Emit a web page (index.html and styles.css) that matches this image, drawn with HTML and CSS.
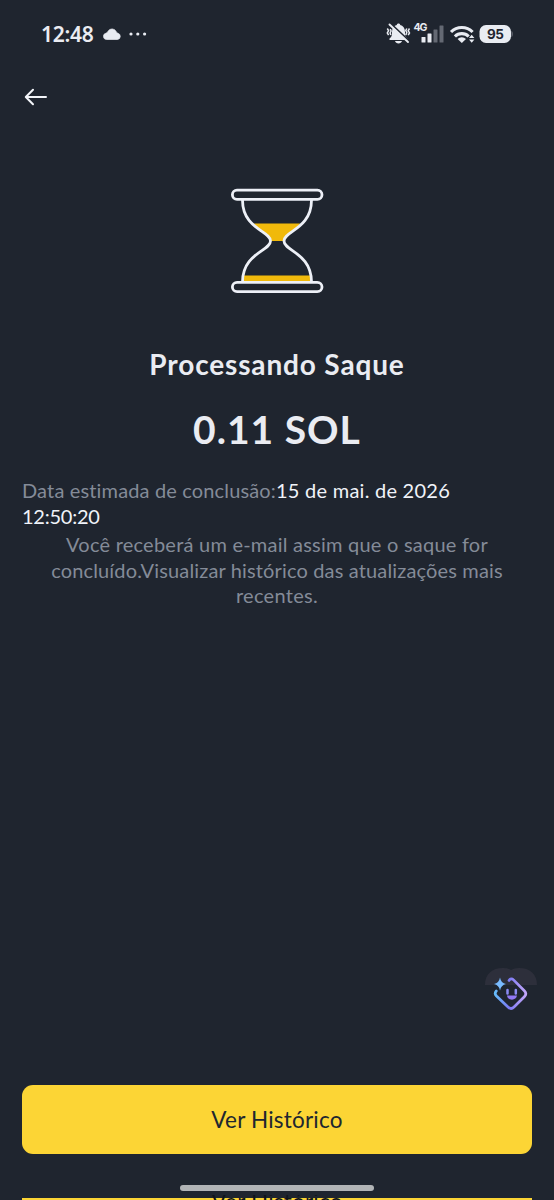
FILE: index.html
```html
<!DOCTYPE html>
<html lang="pt-BR">
<head>
<meta charset="utf-8">
<meta name="viewport" content="width=device-width">
<title>Processando Saque</title>
<link rel="stylesheet" href="styles.css">
</head>
<body>
<div class="screen">
  <header class="status">
    <span class="clock">12:48</span>
    <svg class="cloud" width="18" height="12" viewBox="0 0 18 12"><path d="M3.400 11.500a3.200 3.200 0 0 1-.5-6.300Q4.500 5 5 3.300A4.600 4.600 0 0 1 13.200 3.600Q13.500 5 15 5.300a3.200 3.200 0 0 1-.3 6.200Z" fill="#e9ecf2" stroke="#e9ecf2" stroke-width=".7"/></svg>
    <svg class="dots" width="18" height="4" viewBox="0 0 18 4" fill="#e9ecf2"><circle cx="2" cy="2" r="1.6"/><circle cx="8.8" cy="2" r="1.6"/><circle cx="15.6" cy="2" r="1.6"/></svg>
    <svg class="indicators" width="130" height="28" viewBox="384 20 130 28" fill="#e9ecf2">
      <path d="M389.500 38.500c2.300-1.500 2.500-3 2.500-6.500 0-4 2-6.300 4.800-7 0-2 3.400-2 3.400 0 2.800.7 4.800 3 4.800 7 0 3.500.2 5 2.500 6.500v1.500h-18ZM395 41h7c-.7 3.300-6.300 3.300-7 0Z"/>
      <path d="m391.500 24.500 17.500 16.500" stroke="#1f252f" stroke-width="2"/>
      <path d="m389.500 24.500 18.500 17.500" stroke="#e9ecf2" stroke-width="1.900" stroke-linecap="round"/>
      <path d="m387.300 28.500 1.300 2.200-1.300 2.200 1.300 2.200M390.300 29l.8 2-1 2 .8 2M406.800 28.500l-1 2 1 2-1 2.500M409.500 28.500l-1.300 2.200 1.300 2.200-1.300 2.200" fill="none" stroke="#e9ecf2" stroke-width="1.500"/>
      <text class="network" x="413.500" y="31.300" textLength="14">4G</text>
      <rect x="421.500" y="37" width="4" height="5.500" rx=".5"/><rect x="427.500" y="33.500" width="4" height="9" rx=".5"/>
      <g fill="#646973"><rect x="433.500" y="29.500" width="4" height="13" rx=".5"/><rect x="439.500" y="25.500" width="4" height="17" rx=".5"/></g>
      <g fill="none" stroke="#e9ecf2" stroke-width="3.100"><path d="M451 32a15.200 15.200 0 0 1 21.600 0"/><path d="M454.900 36.500a9.800 9.800 0 0 1 13.800 0"/></g>
      <path d="M457.600 39a6 6 0 0 1 8.400 0l-4.200 4Z"/>
      <path d="M471.700 34.700l2.700 3.300H469ZM471.700 42.700l2.700-3.300H469Z"/>
      <rect x="479.500" y="25" width="31.500" height="18" rx="6.500"/><path d="M511.500 31c1.600.3 1.600 5.700 0 6Z" fill="#747982"/>
      <text class="battery" x="487" y="39" textLength="17">95</text>
    </svg>
  </header>
  <nav class="nav">
    <svg width="24" height="18" viewBox="0 0 24 18"><path d="M22 9H2M9 1.700 1.800 9 9 16.300" fill="none" stroke="#f3f5f9" stroke-width="2" stroke-linecap="round" stroke-linejoin="round"/></svg>
  </nav>
  <main class="content">
    <svg class="hourglass" width="94" height="106" viewBox="230 188 94 106">
      <path d="M254 223.500h46c-4 7-14 10.500-16 17.500h-14c-2-7-12-10.500-16-17.500ZM243.500 275.500h67v6h-67Z" fill="#f0b90b"/>
      <g fill="none" stroke="#edf0f7" stroke-width="2.800">
        <rect x="232.400" y="190.200" width="89.600" height="9.200" rx="4.600"/>
        <rect x="232.400" y="282.300" width="89.600" height="9.400" rx="4.700"/>
        <path d="M242.500 200c0 29 28 31 28 41s-28 12-28 41M311.500 200c0 29-27.500 31-27.500 41s27.500 12 27.500 41"/>
      </g>
    </svg>
    <h1 class="title">Processando Saque</h1>
    <div class="amount">0.11 SOL</div>
    <p class="estimate"><span>Data estimada de conclusão:</span><span class="date">15 de mai. de 2026</span><br><span class="time">12:50:20</span></p>
    <p class="note"><span class="note-first">Você receberá um e-mail assim que o saque for</span><br><span class="note-second">concluído.Visualizar histórico das atualizações mais</span><br><span>recentes.</span></p>
  </main>
  <svg class="assistant" width="54" height="46" viewBox="484 966 54 46">
    <defs><linearGradient id="face" x1="0" x2="1"><stop stop-color="#65bbfa"/><stop offset=".45" stop-color="#7b79f4"/><stop offset="1" stop-color="#c1a6f8"/></linearGradient></defs>
    <path d="M485 985c0-11 7-17 18-17q5 0 8 2 3-2 8-2c11 0 18 6 18 17Z" fill="#2d2f3b"/>
    <path d="M509 980.500q2-3 4.500-.6l10.800 10.800q3 3 0 6l-10.300 10.300q-3 3-6 0L496.500 996q-2.500-2.500-.2-5" fill="none" stroke="url(#face)" stroke-width="2.700" stroke-linecap="round"/>
    <path d="M500 977.500q1 5.500 6 6.500-5 1-6 6.500-1-5.500-6-6.500 5-1 6-6.500Z" fill="#79bbff"/>
    <path d="M507.500 990v3.500M515.800 990v3.500" stroke="#8b8bf4" stroke-width="2.500" stroke-linecap="round"/>
    <path d="M507 995.500h10c-.5 5.500-9.500 5.500-10 0Z" fill="#9179f4"/>
  </svg>
  <button class="primary">Ver Histórico</button>
  <footer class="system"><div class="home"></div><div class="next"><span>Ver Histórico</span></div></footer>
</div>
</body>
</html>
```
FILE: styles.css
```css
* { box-sizing: border-box; }
body { margin: 0; background: #1f252f; }
.screen { position: relative; display: flex; flex-direction: column; width: 554px; height: 1200px; overflow: hidden; background: #1f252f; color: #eaecf2; font-family: Lato, sans-serif; }
.status { display: flex; align-items: center; height: 68px; padding: 0 40px 0 41px; flex: none; }
.clock { width: 53px; font: 600 21px/28px "Noto Sans", sans-serif; letter-spacing: -.3px; white-space: nowrap; }
.cloud { margin-left: 9px; }
.dots { margin-left: 8px; }
.indicators { margin-left: auto; }
.network { font: 700 10.500px Inter, sans-serif; }
.battery { font: 700 13.500px Inter, sans-serif; fill: #1f252f; }
.nav { display: flex; height: 58px; padding: 20px 24px; flex: none; }
.content { display: flex; flex-direction: column; align-items: center; flex: 1; padding: 62px 22px 0; }
.hourglass { flex: none; }
.title { margin: 51px 0 0; font-size: 28px; line-height: 38px; font-weight: 700; letter-spacing: .850px; white-space: nowrap; }
.amount { margin-top: 19px; font-size: 39px; line-height: 54px; font-weight: 700; letter-spacing: 1px; white-space: nowrap; }
.estimate { align-self: stretch; margin: 21px 0 0; font-size: 20px; line-height: 26px; letter-spacing: .150px; color: #848b98; white-space: nowrap; }
.date, .time { color: #f0f3f9; }
.date { letter-spacing: .250px; }
.time { letter-spacing: -.250px; }
.note { margin: 3px 0 0; font-size: 20px; line-height: 25.500px; letter-spacing: .3px; text-align: center; color: #848b98; white-space: nowrap; }
.note-first { letter-spacing: .230px; }
.note-second { letter-spacing: .150px; }
.assistant { position: absolute; left: 484px; top: 966px; }
.primary { height: 69px; flex: none; margin: 0 22px; border: 0; border-radius: 11px; background: #fcd535; color: #202630; font: 400 22.500px/30px Lato, sans-serif; letter-spacing: .2px; padding: 0; }
.system { height: 46px; flex: none; padding-top: 31px; }
.home { width: 194px; height: 6px; margin: 0 auto; border-radius: 3px; background: #b1b4b6; }
.next { display: flex; justify-content: center; height: 2px; margin: 7px 22px 0; background: #fcd535; color: #10151b; font-size: 22.500px; line-height: 14px; letter-spacing: .2px; }
.next span { height: 5px; margin-top: -3px; overflow: hidden; }
```
